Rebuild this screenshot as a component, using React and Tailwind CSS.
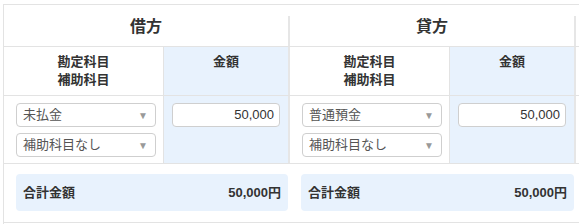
const FONT = { fontFamily: '"Liberation Sans", "Noto Sans CJK JP", sans-serif' }

function Select({ label }) {
  return (
    <div className="w-[140px] h-[24px] border border-[#cfcfcf] rounded-[4px] bg-white flex items-center justify-between pl-[6px] pr-[7px]">
      <span className="text-[13px] text-[#555]">{label}</span>
      <span className="text-[10px] text-[#999]">▼</span>
    </div>
  )
}

function AmountInput({ value }) {
  return (
    <div className="h-[24px] border border-[#cfcfcf] rounded-[4px] bg-white flex items-center justify-end pr-[5px]">
      <span className="text-[13px] text-[#333]">{value}</span>
    </div>
  )
}

function HeaderCell({ title }) {
  return (
    <div className="w-[286px] flex">
      <div className="flex-1 flex items-center justify-center pt-[3px] text-[16px] font-bold text-[#333]">{title}</div>
      <div className="w-[2px] mt-[11px] bg-[#e6e6e6]" />
    </div>
  )
}

function SubHeader() {
  return (
    <>
      <div className="w-[160px] border-r border-[#e3e3e3] pt-[6px] text-center text-[13px] font-bold leading-[18px] text-[#333]">
        <div>勘定科目</div>
        <div>補助科目</div>
      </div>
      <div className="w-[126px] bg-[#e8f2fd] border-r-2 border-[#e6e6e6] pt-[6px] text-center text-[13px] font-bold leading-[18px] text-[#333]">
        金額
      </div>
    </>
  )
}

function InputCells({ account, amount }) {
  return (
    <>
      <div className="w-[160px] border-r border-[#e3e3e3] pl-[12px] pt-[7px] flex flex-col gap-[6px]">
        <Select label={account} />
        <Select label="補助科目なし" />
      </div>
      <div className="w-[126px] bg-[#e8f2fd] border-r-2 border-[#e6e6e6] px-[8px] pt-[7px]">
        <AmountInput value={amount} />
      </div>
    </>
  )
}

function TotalBox({ className }) {
  return (
    <div className={`h-[37px] bg-[#e8f2fd] rounded-[4px] flex items-center justify-between px-[7px] text-[13px] font-bold text-[#333] ${className}`}>
      <span>合計金額</span>
      <span>50,000円</span>
    </div>
  )
}

export default function App() {
  return (
    <div className="w-[579px] h-[224px] bg-white pl-[3px] pt-[4px] overflow-hidden" style={FONT}>
      <div className="border-l border-t border-[#e3e3e3] h-full flex flex-col">
        <div className="h-[42px] flex border-b border-[#e3e3e3]">
          <HeaderCell title="借方" />
          <HeaderCell title="貸方" />
        </div>
        <div className="h-[49px] flex border-b border-[#e3e3e3]">
          <SubHeader />
          <SubHeader />
        </div>
        <div className="h-[68px] flex border-b border-[#e3e3e3]">
          <InputCells account="未払金" amount="50,000" />
          <InputCells account="普通預金" amount="50,000" />
        </div>
        <div className="h-[59px] flex border-b border-[#e3e3e3] pl-[12px] pt-[10px]">
          <TotalBox className="w-[272px]" />
          <TotalBox className="w-[273px] ml-[13px]" />
        </div>
      </div>
    </div>
  )
}
